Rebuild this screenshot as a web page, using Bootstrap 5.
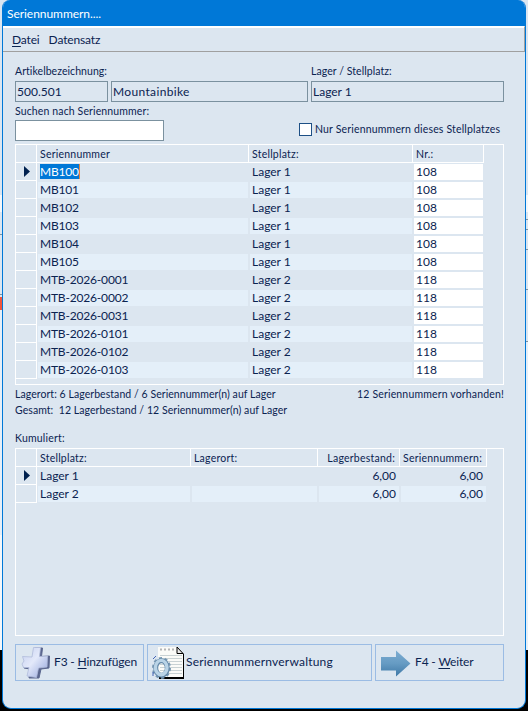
<!DOCTYPE html>
<html lang="de">
<head>
  <meta charset="UTF-8">
  <title>Seriennummern</title>
  <link href="https://cdn.jsdelivr.net/npm/bootstrap@5.3.2/dist/css/bootstrap.min.css" rel="stylesheet">
  <style>
    body {
      width: 528px;
      height: 711px;
      overflow: hidden;
      background:
        linear-gradient(#dbe6f1 0 195px, #f4f7fa 195px 212px, #dbe6f1 212px 234px, #7d919e 234px 235px, #dbe6f1 235px 294px, #7d919e 294px 295px, #dbe6f1 295px 297px, #f0553c 297px 310px, #e6eff8 310px 535px, #f4f7fa 535px 650px, #000 650px) left / 3px 711px no-repeat,
        linear-gradient(#dbe6f1 0 195px, #f4f7fa 195px 212px, #dbe6f1 212px 219px, #7d919e 219px 220px, #dbe6f1 220px 229px, #7d919e 229px 230px, #dbe6f1 230px 249px, #7d919e 249px 250px, #dbe6f1 250px 289px, #7d919e 289px 290px, #dbe6f1 290px 341px, #7d919e 341px 342px, #e6eff8 342px 535px, #e8f0f7 535px 650px, #000 650px) right / 3px 711px no-repeat,
        linear-gradient(#dbe6f1 0 650px, #000 650px);
      color: #0b2350;
      font-family: Lato, "Open Sans", sans-serif;
      font-size: 12px;
      line-height: 16px;
      white-space: nowrap;
    }
    .fenster {
      width: 524px;
      height: 709px;
      margin-left: 2px;
      background: #dce6f0;
      border: 1px solid #0078d7;
      border-top: 0;
      border-radius: 8px 8px 9px 9px;
      overflow: hidden;
    }
    .titel {
      height: 26px;
      padding: 6px 0 0 4px;
      background: #0078d7;
      color: #fff;
      letter-spacing: -.05px;
    }
    .menue {
      height: 26px;
      padding: 5px 0 0 9px;
      gap: 9px;
      border-top: 1px solid #fff;
      border-right: 1px solid #a0a0a0;
      border-bottom: 1px solid #a0a0a0;
      box-shadow: inset 0 1px #fff;
      letter-spacing: -.15px;
    }
    .inhalt { padding: 12px 21px 0 12px; }
    .klein { font-size: 10.5px; line-height: 14px; letter-spacing: .06px; }
    .label-zeile { margin-bottom: 3px; }
    .label-artikel { width: 296px; }
    .such-label { margin: 2px 0; letter-spacing: .13px; }
    .nur-zeile { margin-top: 21px; width: 205px; letter-spacing: .17px; }
    .feld {
      height: 21px;
      padding: 2px 0 0 1px;
      border: 1px solid #7b919f;
    }
    .f-artikel { width: 93px; }
    .f-name { width: 197px; letter-spacing: .35px; }
    .f-lager { width: 193px; }
    .f-suche { width: 149px; background: #fff; }
    .kasten {
      width: 13px;
      height: 13px;
      border: 1px solid #1d4f85;
      background: #fff;
    }
    .gitter { border: 1px solid #fff; }
    .g-serien { height: 241px; margin-top: 3px; }
    .g-summe { height: 188px; margin-top: 3px; }
    .kopf, .zeile { display: grid; height: 18px; }
    .g-serien .kopf, .g-serien .zeile { grid-template-columns: 21px 212px 164px 71px; width: 468px; }
    .g-summe .kopf, .g-summe .zeile { grid-template-columns: 21px 154px 127px 82px 87px; width: 471px; }
    .kopf > div {
      border-right: 1px solid #fff;
      border-bottom: 1px solid #fff;
      padding: 2px 4px 0 3px;
      letter-spacing: .23px;
    }
    .zeile > div { margin: 1px 0 1px 1px; padding-left: 2px; border-right: 1px solid #dce6f0; }
    .zeile > .zahl { padding-right: 3px; text-align: right; }
    .zeile > .nummer { letter-spacing: -.18px; }
    .zeile > .marke {
      margin: 0;
      padding: 3px 0 0 8px;
      border-right: 1px solid #fff;
      border-bottom: 1px solid #fff;
      line-height: 0;
    }
    .zeile:nth-child(odd) > div:not(.marke) { background: #e4eff9; }
    .g-serien .zeile > div:last-child { background: #fff; }
    .wahl { display: inline-block; height: 15px; line-height: 15px; background: #0078d7; color: #fff; border-right: 1px solid #e8833a; vertical-align: top; }
    .knopf {
      height: 37px;
      border: 1px solid #9bbce4;
      border-radius: 0;
      background: transparent;
      color: #0b2350;
      font-size: 12px;
      line-height: 16px;
      padding: 0;
      display: flex;
      align-items: center;
    }
    .knopf span { padding-bottom: 2px; }
    .k-aussen { width: 129px; letter-spacing: -.15px; }
    .k-mitte { width: 225px; letter-spacing: .2px; }
    .knopf-leiste { gap: 3px; margin-top: 8px; }
    .i-plus { margin: 0 1px 0 5px; }
    .i-blatt { margin: 0 1px 0 4px; }
    .i-pfeil { margin: 1px 4px 0 5px; }
    u { text-underline-offset: 2px; }
  </style>
</head>
<body>
<div class="fenster">
  <div class="titel">Seriennummern....</div>
  <div class="menue d-flex">
    <span><u>D</u>atei</span>
    <span>Datensatz</span>
  </div>

  <div class="inhalt">
    <div class="d-flex klein label-zeile">
      <div class="label-artikel">Artikelbezeichnung:</div>
      <div>Lager / Stellplatz:</div>
    </div>
    <div class="d-flex" style="gap: 3px">
      <div class="feld f-artikel">500.501</div>
      <div class="feld f-name">Mountainbike</div>
      <div class="feld f-lager">Lager 1</div>
    </div>
    <div class="d-flex justify-content-between">
      <div>
        <div class="klein such-label">Suchen nach Seriennummer:</div>
        <div class="feld f-suche"></div>
      </div>
      <div class="d-flex klein nur-zeile">
        <div class="kasten"></div>
        <div class="nur-text" style="margin: -1px 0 0 3px">Nur Seriennummern dieses Stellplatzes</div>
      </div>
    </div>

    <div class="gitter g-serien" id="serien">
      <div class="kopf klein"><div></div><div>Seriennummer</div><div>Stellplatz:</div><div>Nr.:</div></div>
    </div>
    <div class="d-flex justify-content-between klein" style="margin-top: 2px">
      <div>Lagerort: 6 Lagerbestand / 6 Seriennummer(n) auf Lager</div>
      <div style="letter-spacing: .16px">12 Seriennummern vorhanden!</div>
    </div>
    <div class="klein" style="margin-top: 2px">Gesamt:&nbsp; 12 Lagerbestand / 12 Seriennummer(n) auf Lager</div>

    <div class="klein" style="margin-top: 14px; letter-spacing: .2px">Kumuliert:</div>
    <div class="gitter g-summe">
      <div class="kopf klein"><div></div><div>Stellplatz:</div><div>Lagerort:</div><div class="text-end">Lagerbestand:</div><div class="text-end">Seriennummern:</div></div>
      <div class="zeile">
        <div class="marke"><svg width="6" height="11"><path d="M0 0L6 5.5L0 11Z" fill="#00214f"/></svg></div>
        <div>Lager 1</div><div></div><div class="zahl">6,00</div><div class="zahl">6,00</div>
      </div>
      <div class="zeile">
        <div class="marke"></div>
        <div>Lager 2</div><div></div><div class="zahl">6,00</div><div class="zahl">6,00</div>
      </div>
    </div>

    <div class="d-flex knopf-leiste">
      <button class="btn knopf k-aussen">
        <svg class="i-plus" width="32" height="35" viewBox="0 0 32 35">
          <defs>
            <linearGradient id="plus" x1="0" y1="0" x2="1" y2="1"><stop offset="0" stop-color="#c5cfef"/><stop offset=".45" stop-color="#e3e9fa"/><stop offset="1" stop-color="#93a5db"/></linearGradient>
          </defs>
          <path d="M14 3L21.500 3L20.500 11.500L28.500 11L28 23L20 24L18 33L8 33L9 24L3 23L4 14L12 13Z" fill="#5a668e" stroke="#5a668e" stroke-linejoin="round"/>
          <path d="M12.500 2.500L19.500 2.500L18.500 11.500L26.500 11L26 22L17.500 23L15.500 32.500L6 31L8 22.500L2.500 22.500L1 19L3 16L1.500 11.500L11 12Z" fill="url(#plus)" stroke="#b0bbda" stroke-width=".8" stroke-linejoin="round"/>
        </svg>
        <span>F3 - <u>H</u>inzufügen</span>
      </button>
      <button class="btn knopf k-mitte">
        <svg class="i-blatt" width="33" height="35" viewBox="0 0 33 35">
          <path d="M25 2L32 9V34H7V32H25Z" fill="#000"/>
          <path d="M6 2H25L31 8V32H6Z" fill="#fbfbf8"/>
          <path d="M25 2L31 8.500H25Z" fill="#e8e8e8" stroke="#000"/>
          <path d="M8 10.500H30M8 13.500H30M8 16.500H30M8 19.500H30M8 22.500H30M8 25.500H30M8 28.500H30" stroke="#c9d2d4"/>
          <path d="M8 4.500H24" stroke="#b5b5b5" stroke-width="2" stroke-dasharray="2 2"/>
          <ellipse cx="9.500" cy="23" rx="8" ry="9.500" fill="none" stroke="#7898b3" stroke-width="3" stroke-dasharray="3 2.500"/>
          <ellipse cx="9.500" cy="23" rx="5.800" ry="7.200" fill="none" stroke="#6488a8" stroke-width="5"/>
          <ellipse cx="9.200" cy="22.600" rx="5.800" ry="7.200" fill="none" stroke="#b9d3e6" stroke-width="3.400"/>
          <path d="M1 14L4 11M1 27V31" stroke="#4263b5"/>
        </svg>
        <span>Seriennummernverwaltung</span>
      </button>
      <button class="btn knopf k-aussen">
        <svg class="i-pfeil" width="30" height="27" viewBox="0 0 30 27">
          <defs>
            <linearGradient id="pfeil" x1="0" y1="0" x2="0" y2="1"><stop offset="0" stop-color="#7dadd2"/><stop offset=".5" stop-color="#669bc3"/><stop offset="1" stop-color="#3e78a6"/></linearGradient>
          </defs>
          <path d="M0 7H15V0.500L29.500 13.500L15 26.500V20.500H0Z" fill="url(#pfeil)"/>
        </svg>
        <span>F4 - <u>W</u>eiter</span>
      </button>
    </div>
  </div>
</div>

<script>
  const serien = [
    ["MB100", 1], ["MB101", 1], ["MB102", 1], ["MB103", 1], ["MB104", 1], ["MB105", 1],
    ["MTB-2026-0001", 2], ["MTB-2026-0002", 2], ["MTB-2026-0031", 2],
    ["MTB-2026-0101", 2], ["MTB-2026-0102", 2], ["MTB-2026-0103", 2]
  ];
  const pfeil = '<svg width="6" height="11"><path d="M0 0L6 5.5L0 11Z" fill="#00214f"/></svg>';
  const gitter = document.getElementById("serien");

  serien.forEach(([nummer, lager], i) => {
    const zeile = document.createElement("div");
    zeile.className = "zeile";
    // Der erste Datensatz ist markiert
    zeile.innerHTML = `<div class="marke">${i === 0 ? pfeil : ""}</div>
      <div class="nummer">${i === 0 ? `<span class="wahl">${nummer}</span>` : nummer}</div>
      <div>Lager ${lager}</div>
      <div>${lager === 1 ? 108 : 118}</div>`;
    gitter.appendChild(zeile);
  });
</script>
</body>
</html>
